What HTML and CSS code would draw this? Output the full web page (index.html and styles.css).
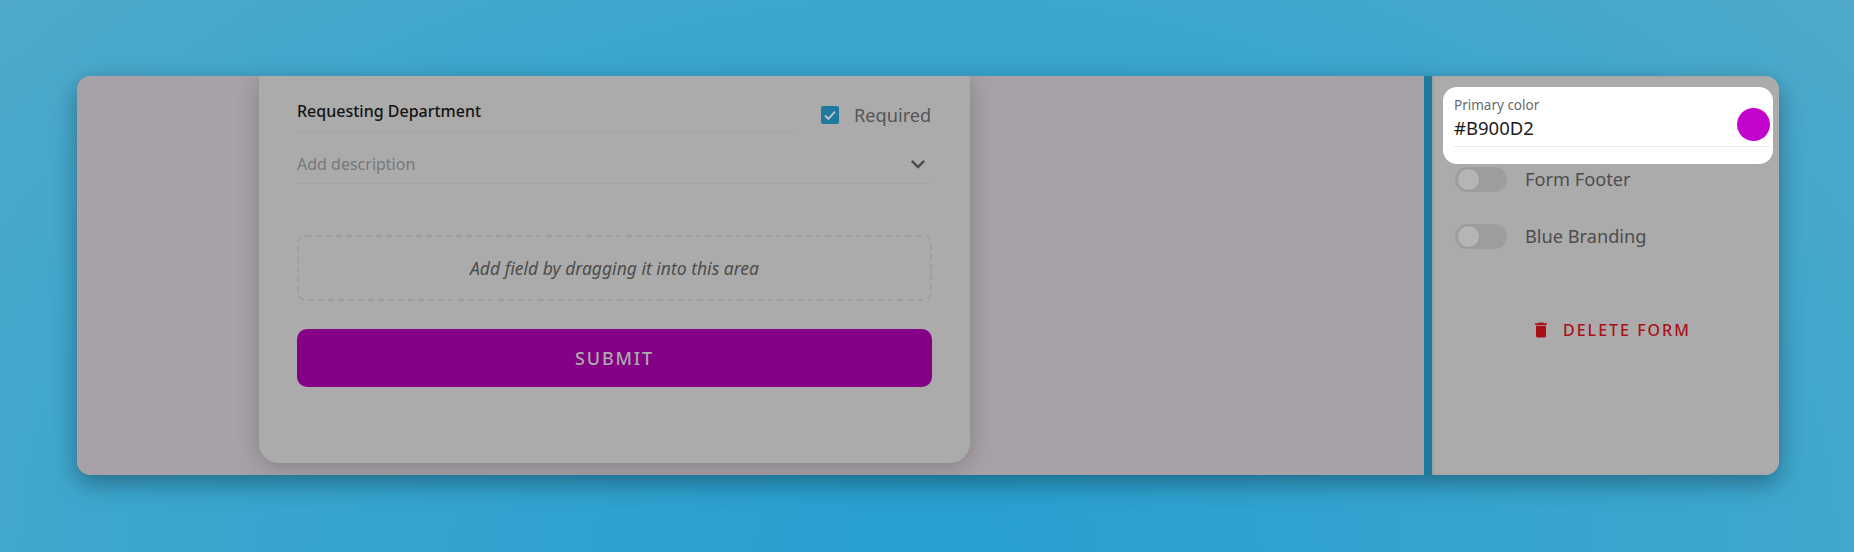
FILE: index.html
```html
<!DOCTYPE html>
<html lang="en">
<head>
<meta charset="utf-8">
<title>Form editor</title>
<link rel="stylesheet" href="styles.css">
</head>
<body>
<div class="stage">
  <div class="window">
    <main class="canvas">
      <section class="card">
        <div class="title-row">
          <div class="title-field">Requesting Department</div>
          <label class="required">
            <span class="checkbox">
              <svg viewBox="0 0 18 18" width="18" height="18"><path d="M4 9.5l3.4 3.4L14 5.6" fill="none" stroke="#c4c4c4" stroke-width="1.8"/></svg>
            </span>
            <span>Required</span>
          </label>
        </div>
        <div class="desc-row">
          <span>Add description</span>
          <svg class="chevron" viewBox="0 0 24 24" width="28" height="28"><path d="M16.59 8.59L12 13.17 7.41 8.59 6 10l6 6 6-6z"/></svg>
        </div>
        <div class="dropzone">Add field by dragging it into this area</div>
        <button class="submit" type="button">SUBMIT</button>
      </section>
    </main>
    <div class="divider"></div>
    <aside class="sidebar">
      <div class="popup">
        <div class="popup-field">
          <div class="popup-text">
            <div class="popup-label">Primary color</div>
            <div class="popup-value">#B900D2</div>
          </div>
          <span class="swatch"></span>
        </div>
      </div>
      <div class="toggle-row"><span class="toggle"><span class="knob"></span></span><span>Form Footer</span></div>
      <div class="toggle-row"><span class="toggle"><span class="knob"></span></span><span>Blue Branding</span></div>
      <button class="delete" type="button">
        <svg viewBox="0 0 24 24" width="20" height="20"><path d="M6 19c0 1.1.9 2 2 2h8c1.1 0 2-.9 2-2V7H6v12zM19 4h-3.5l-1-1h-5l-1 1H5v2h14V4z"/></svg>
        <span>DELETE FORM</span>
      </button>
    </aside>
  </div>
</div>
</body>
</html>
```
FILE: styles.css
```css
* { box-sizing: border-box; }
html, body { margin: 0; height: 100%; }
body {
  font-family: "Noto Sans", "Open Sans", sans-serif;
  overflow: hidden;
}
.stage {
  height: 552px;
  padding: 76px 75px 77px 77px;
  background: radial-gradient(ellipse 1300px 900px at 50% 100%, #289fd0 0, #3aa6cf 60%, #54aac8 100%);
}
.window {
  display: flex;
  height: 399px;
  border-radius: 14px;
  background: #a8a2a8;
  box-shadow: 0 8px 24px rgba(0,0,0,.35);
}
.canvas {
  flex: 0 0 1347px;
  padding: 0 454px 12px 182px;
  background: #a8a2a8;
  border-radius: 14px 0 0 14px;
  overflow: hidden;
}
.card {
  height: 387px;
  padding: 0 38px;
  background: #ababab;
  border-radius: 0 0 20px 20px;
  box-shadow: 0 4px 24px rgba(0,0,0,.22);
}
.title-row { display: flex; height: 56px; }
.title-field {
  flex: 0 0 499px;
  padding-top: 24px;
  border-bottom: 1px solid #a3a3a3;
  font-size: 16px;
  line-height: 22px;
  font-weight: 500;
  color: #141414;
}
.required {
  display: flex;
  align-items: center;
  gap: 15px;
  margin: 28px 0 0 25px;
  height: 22px;
  font-size: 18.2px;
  color: #565656;
}
.checkbox {
  display: block;
  width: 18px;
  height: 18px;
  border-radius: 2px;
  background: #1f7a9f;
}
.checkbox svg { display: block; }
.desc-row {
  display: flex;
  justify-content: space-between;
  align-items: center;
  height: 52px;
  padding: 12px 0 0 0;
  border-bottom: 1px solid #a3a3a3;
  font-size: 16px;
  color: #787878;
}
.chevron { fill: #4c4c4c; }
.dropzone {
  display: flex;
  align-items: center;
  justify-content: center;
  height: 66px;
  margin-top: 51px;
  border: 2px dashed #a0a0a0;
  border-radius: 9px;
  font-size: 17.5px;
  font-style: italic;
  color: #4d4d4d;
}
.submit {
  display: block;
  width: 100%;
  height: 58px;
  margin-top: 28px;
  border: 0;
  border-radius: 10px;
  background: #850087;
  color: #ababab;
  font: 500 18px "Noto Sans", sans-serif;
  letter-spacing: 1.8px;
}
.divider { flex: 0 0 8px; background: #1f7a9f; }
.sidebar {
  position: relative;
  flex: 0 0 347px;
  padding: 90px 0 0 23px;
  background: #ababab;
  border-radius: 0 14px 14px 0;
  box-shadow: inset 2px 0 2px rgba(0,0,0,.08);
}
.popup {
  position: absolute;
  left: 11px;
  top: 11px;
  width: 330px;
  height: 77px;
  padding: 7px 3px 0 11px;
  background: #fff;
  border-radius: 14px;
  z-index: 1;
}
.popup-field {
  display: flex;
  justify-content: space-between;
  align-items: flex-end;
  height: 53px;
  padding-bottom: 5px;
  border-bottom: 1px solid #e8eceb;
}
.popup-label { font-size: 13.5px; line-height: 20px; color: #6b6b6b; }
.popup-value { font-size: 18.5px; line-height: 26px; color: #1c1c1c; }
.swatch {
  width: 33px;
  height: 33px;
  border-radius: 50%;
  background: #c205cd;
}
.toggle-row {
  display: flex;
  align-items: center;
  gap: 18px;
  height: 26px;
  margin-bottom: 31px;
  font-size: 18.2px;
  color: #4d4d4d;
}
.toggle {
  display: block;
  width: 52px;
  height: 25px;
  padding: 2px 3px;
  border-radius: 13px;
  background: #9c9d9c;
}
.knob {
  display: block;
  width: 21px;
  height: 21px;
  border-radius: 50%;
  background: #b5b5b5;
}
.delete {
  display: flex;
  align-items: center;
  gap: 12px;
  margin: 70px 0 0 76px;
  padding: 0;
  border: 0;
  background: none;
  color: #ab1017;
  font: 500 16px "Noto Sans", sans-serif;
  letter-spacing: 2px;
}
.delete svg { fill: #ab1017; display: block; }
```
